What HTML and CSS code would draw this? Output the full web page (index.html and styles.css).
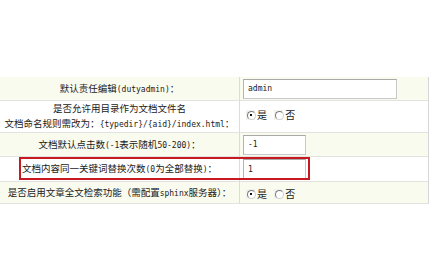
FILE: index.html
```html
<!DOCTYPE html>
<html lang="zh-CN">
<head>
    <meta charset="UTF-8">
    <title>系统参数</title>
    <link rel="stylesheet" href="styles.css">
</head>
<body>
    <div id="panel">
        <table id="config-table">
            <colgroup>
                <col class="col-label">
                <col class="col-value">
            </colgroup>
            <tr class="alt row-1">
                <td class="label">默认责任编辑<span class="en">(dutyadmin)</span>：</td>
                <td class="value"><input type="text" class="txt-long" value="admin"></td>
            </tr>
            <tr class="row-2">
                <td class="label two-lines">是否允许用目录作为文档文件名<br>文档命名规则需改为：<span class="en">{typedir}/{aid}/index.html</span>：</td>
                <td class="value top">
                    <span class="radio checked"></span><span class="opt">是</span>
                    <span class="radio"></span><span class="opt">否</span>
                </td>
            </tr>
            <tr class="alt row-3">
                <td class="label">文档默认点击数<span class="en">(-1</span>表示随机<span class="en">50-200)</span>：</td>
                <td class="value"><input type="text" class="txt-short" value="-1"></td>
            </tr>
            <tr class="row-4">
                <td class="label">文档内容同一关键词替换次数<span class="en">(0</span>为全部替换<span class="en">)</span>：</td>
                <td class="value"><input type="text" class="txt-short" value="1"></td>
            </tr>
            <tr class="alt row-5">
                <td class="label">是否启用文章全文检索功能（需配置<span class="en">sphinx</span>服务器）：</td>
                <td class="value">
                    <span class="radio checked"></span><span class="opt">是</span>
                    <span class="radio"></span><span class="opt">否</span>
                </td>
            </tr>
        </table>
        <!-- 标注框 -->
        <div id="highlight"></div>
    </div>
</body>
</html>
```

FILE: styles.css
```css
* {
    margin: 0;
    padding: 0;
    box-sizing: border-box;
}

body {
    background-color: #fff;
    color: #1a1a1a;
    font-family: 'Noto Sans CJK SC', sans-serif;
    font-size: 9.5px;
}

#panel {
    position: relative;
    width: 429px;
    padding-top: 77px;
}

#config-table {
    width: 429px;
    table-layout: fixed;
    border-collapse: separate;
    border-spacing: 0;
}

.col-label {
    width: 240px;
}

.col-value {
    width: 189px;
}

td {
    box-sizing: content-box;
    border-bottom: 1px solid #e2e2e0;
    vertical-align: middle;
    white-space: nowrap;
}

td.label {
    text-align: center;
    border-right: 1px solid #dcdcdc;
    line-height: 15px;
}

.en {
    font-family: 'DejaVu Sans Mono', monospace;
    font-size: 8px;
}

td.value {
    padding-left: 3px;
    border-right: 1px solid #d6d6d6;
}

td.top {
    vertical-align: top;
    padding-top: 6px;
}

.alt {
    background-color: #fafbef;
}

.row-1 td { height: 23px; }
.row-2 td { height: 30px; }
.row-2 td.top { height: 24px; }
.row-3 td { height: 23px; }
.row-4 td { height: 24px; }
.row-5 td { height: 21px; }

input {
    display: block;
    height: 20px;
    border: 1px solid #c8c8c8;
    border-top-color: #a9a9a9;
    border-left-color: #b4b4b4;
    background-color: #fff;
    padding: 0 4px;
    font-family: 'DejaVu Sans Mono', monospace;
    font-size: 8px;
    color: #1a1a1a;
}

.txt-long {
    width: 154px;
}

.txt-short {
    width: 63px;
}

.radio {
    display: inline-block;
    vertical-align: middle;
    width: 9px;
    height: 10px;
    margin-left: 3px;
    background-color: #f1f1ee;
    position: relative;
}

.radio::before {
    content: '';
    position: absolute;
    left: 1px;
    top: 1px;
    width: 7px;
    height: 7px;
    border-radius: 50%;
    background-color: #fff;
    border: 1px solid #d0d0d0;
    border-top-color: #7a7a7a;
    border-left-color: #7a7a7a;
}

.radio.checked::after {
    content: '';
    position: absolute;
    left: 4px;
    top: 4px;
    width: 2px;
    height: 2px;
    background-color: #111;
}

.opt {
    display: inline-block;
    vertical-align: middle;
    margin-left: 2px;
    margin-right: 2px;
    line-height: 12px;
    font-size: 10px;
}

#highlight {
    position: absolute;
    left: 19px;
    top: 157px;
    width: 291px;
    height: 23px;
    border: 2px solid #c7191f;
}
```
